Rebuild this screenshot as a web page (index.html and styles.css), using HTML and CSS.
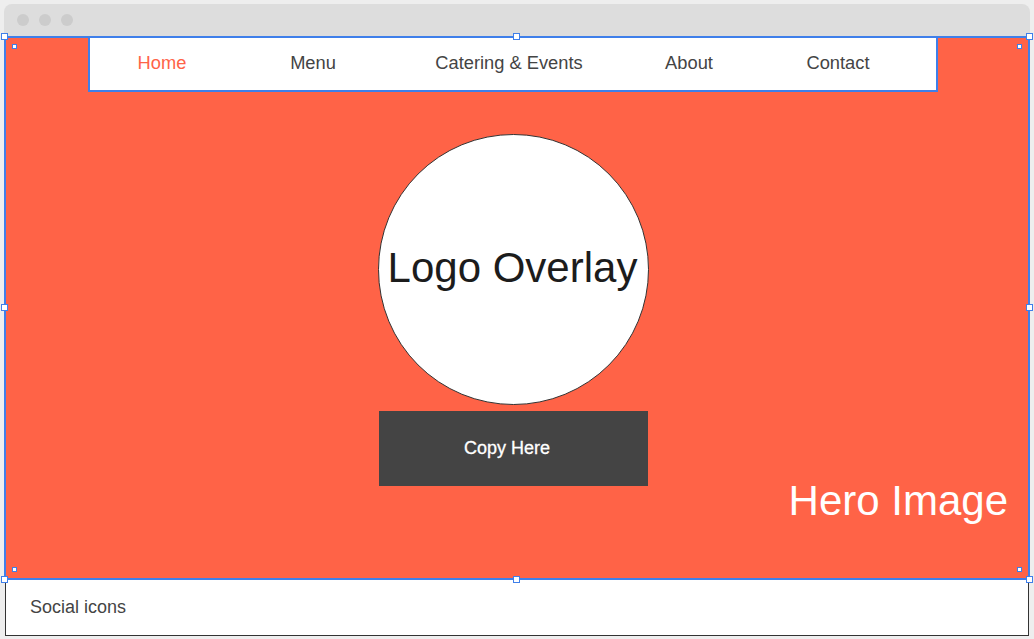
FILE: index.html
```html
<!DOCTYPE html>
<html lang="en">
<head>
<meta charset="utf-8">
<title>Wireframe</title>
<link rel="stylesheet" href="styles.css">
</head>
<body>
<div class="window">
  <div class="titlebar">
    <span class="dot"></span><span class="dot"></span><span class="dot"></span>
  </div>
  <section class="hero">
    <nav class="nav">
      <a class="nav-item active">Home</a>
      <a class="nav-item">Menu</a>
      <a class="nav-item">Catering &amp; Events</a>
      <a class="nav-item">About</a>
      <a class="nav-item">Contact</a>
    </nav>
    <div class="stage">
      <div class="center-col">
        <div class="logo-circle">Logo Overlay</div>
        <div class="copy-btn">Copy Here</div>
      </div>
      <div class="hero-label">Hero Image</div>
    </div>
    <span class="handle h-tl"></span>
    <span class="handle h-tm"></span>
    <span class="handle h-tr"></span>
    <span class="handle h-ml"></span>
    <span class="handle h-mr"></span>
    <span class="handle h-bl"></span>
    <span class="handle h-bm"></span>
    <span class="handle h-br"></span>
    <span class="mini m-tl"></span>
    <span class="mini m-tr"></span>
    <span class="mini m-bl"></span>
    <span class="mini m-br"></span>
  </section>
  <footer class="footer">Social icons</footer>
</div>
</body>
</html>
```

FILE: styles.css
```css
* { box-sizing: border-box; }
html, body { margin: 0; padding: 0; }
body {
  background: #eeeeee;
  font-family: "Liberation Sans", Arial, sans-serif;
  width: 1034px;
  height: 639px;
  overflow: hidden;
}
.window {
  margin: 4px 0 0 4px;
  width: 1026px;
}
.titlebar {
  height: 32px;
  background: #dddddd;
  border-radius: 8px 8px 0 0;
  display: flex;
  align-items: center;
  gap: 10px;
  padding-left: 13px;
}
.dot {
  width: 12px;
  height: 12px;
  border-radius: 50%;
  background: #cccccc;
}
.hero {
  position: relative;
  height: 544px;
  background: #ff6347;
  border: 2px solid #3f7fea;
  display: flex;
  flex-direction: column;
}
.nav {
  margin-left: 82px;
  width: 850px;
  height: 54px;
  background: #ffffff;
  border: 2px solid #3f7fea;
  border-top: none;
  display: grid;
  grid-template-columns: 144px 158px 234px 126px 172px;
  align-items: center;
  font-size: 18.3px;
  color: #444444;
}
.nav-item {
  text-align: center;
  padding-bottom: 2px;
}
.nav-item.active { color: #ff6347; }
.stage {
  flex: 1;
  display: grid;
}
.center-col {
  grid-area: 1 / 1;
  display: flex;
  flex-direction: column;
  align-items: center;
  padding-right: 8px;
  padding-top: 42px;
}
.logo-circle {
  width: 271px;
  height: 271px;
  border-radius: 50%;
  background: #ffffff;
  border: 1px solid #333333;
  display: flex;
  align-items: center;
  justify-content: center;
  font-size: 42px;
  color: #1c1c1c;
  padding-bottom: 4px;
  padding-right: 1px;
}
.copy-btn {
  margin-top: 6px;
  width: 269px;
  height: 75px;
  background: #444444;
  color: #ffffff;
  font-size: 18px;
  display: flex;
  align-items: center;
  justify-content: center;
  padding-right: 12px;
  -webkit-text-stroke: 0.3px #ffffff;
}
.hero-label {
  grid-area: 1 / 1;
  align-self: end;
  justify-self: end;
  font-size: 42px;
  color: #ffffff;
  padding-right: 20px;
  padding-bottom: 53px;
}
.handle {
  position: absolute;
  width: 7px;
  height: 7px;
  background: #ffffff;
  border: 1px solid #3f7fea;
}
.h-tl { left: -5px; top: -5px; }
.h-tm { left: 507px; top: -5px; }
.h-tr { right: -5px; top: -5px; }
.h-ml { left: -5px; top: 266px; }
.h-mr { right: -5px; top: 266px; }
.h-bl { left: -5px; bottom: -5px; }
.h-bm { left: 507px; bottom: -5px; }
.h-br { right: -5px; bottom: -5px; }
.mini {
  position: absolute;
  width: 5px;
  height: 5px;
  background: #ffffff;
  border: 1px solid #3f7fea;
}
.m-tl { left: 6px; top: 6px; }
.m-tr { right: 6px; top: 6px; }
.m-bl { left: 6px; bottom: 6px; }
.m-br { right: 6px; bottom: 6px; }
.footer {
  height: 56px;
  margin-left: 1px;
  width: 1024px;
  background: #ffffff;
  border: 1px solid #333333;
  border-top: none;
  display: flex;
  align-items: center;
  padding-left: 24px;
  font-size: 18px;
  color: #444444;
}
```
